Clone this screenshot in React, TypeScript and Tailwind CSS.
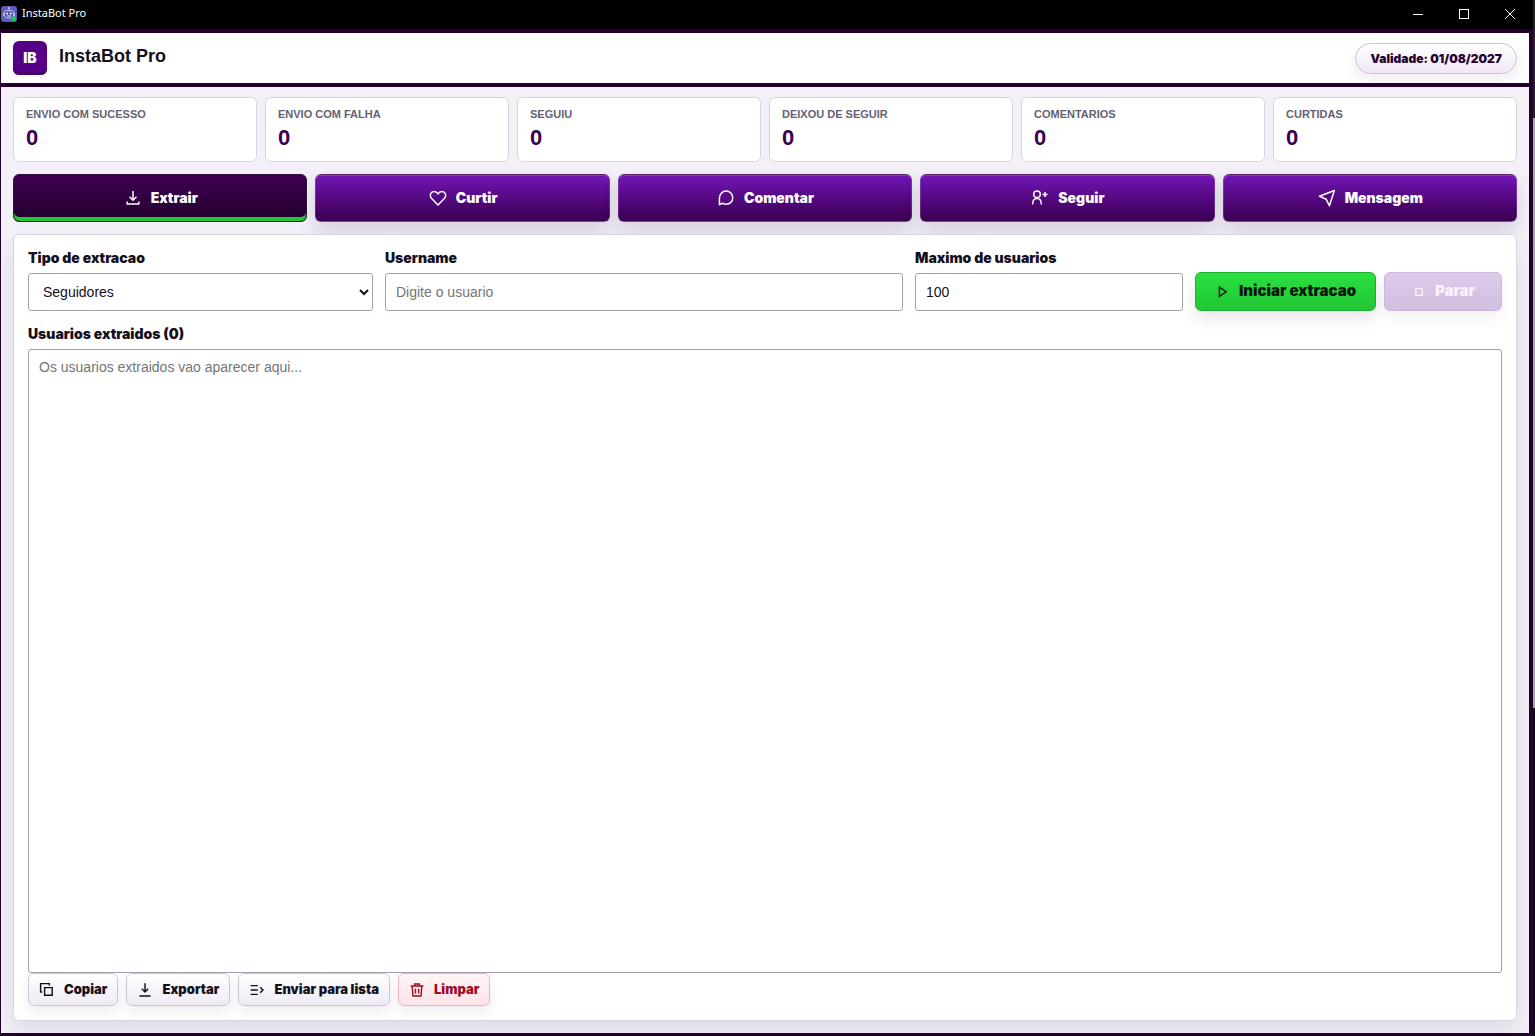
import { ReactNode, useState } from "react";

const heavy = "font-['Arial_Black','Inter',sans-serif] font-black";

const Icon = ({
  children,
  className = "h-5 w-5",
}: {
  children: ReactNode;
  className?: string;
}) => (
  <svg
    viewBox="0 0 20 20"
    className={`shrink-0 ${className}`}
    fill="none"
    stroke="currentColor"
    strokeWidth="1.5"
    aria-hidden="true"
  >
    {children}
  </svg>
);

const DownloadIcon = () => (
  <Icon>
    <path d="M10 3v9M6.5 8.8 10 12.3l3.5-3.5M4.2 13.500v2.500h11.600v-2.500" />
  </Icon>
);

const HeartIcon = () => (
  <Icon>
    <path
      strokeLinejoin="round"
      d="M10 17 3.400 10.300C.8 7 3 3.600 6 3.600c1.800 0 3.200 1 4 2.400.8-1.400 2.200-2.400 4-2.400 3 0 5.200 3.400 2.600 6.700z"
    />
  </Icon>
);

const CommentIcon = () => (
  <Icon>
    <path
      strokeLinejoin="round"
      d="M3.400 16.600v-6.300C3.400 6.300 6.300 3 10.200 3c3.800 0 6.500 3 6.500 6.700s-2.700 6.600-6.500 6.600c-1.500 0-2.700-.3-3.800-1.100z"
    />
  </Icon>
);

const FollowIcon = () => (
  <Icon>
    <circle cx="7" cy="6.300" r="3.300" />
    <path d="M2.600 16.500c0-4 1.600-5.900 4.400-5.900s4.400 1.900 4.400 5.900M15 4v5M12.500 6.500h5" />
  </Icon>
);

const SendIcon = () => (
  <Icon>
    <path strokeLinejoin="round" d="M2.500 8.300 17.300 2.500 12.400 17.700 9.200 11.300z" />
  </Icon>
);

const stats = [
  { label: "ENVIO COM SUCESSO", value: 0 },
  { label: "ENVIO COM FALHA", value: 0 },
  { label: "SEGUIU", value: 0 },
  { label: "DEIXOU DE SEGUIR", value: 0 },
  { label: "COMENTARIOS", value: 0 },
  { label: "CURTIDAS", value: 0 },
];

const tabs = [
  { name: "Extrair", icon: <DownloadIcon /> },
  { name: "Curtir", icon: <HeartIcon /> },
  { name: "Comentar", icon: <CommentIcon /> },
  { name: "Seguir", icon: <FollowIcon /> },
  { name: "Mensagem", icon: <SendIcon /> },
];

const windowButtonClass = "flex h-7 w-[46px] items-center justify-center";

const TitleBar = () => (
  <div className="flex h-[29px] shrink-0 items-start justify-between bg-black text-white">
    <div className="flex h-[27px] items-center gap-[5px] pl-px">
      <svg viewBox="0 0 16 16" className="h-4 w-4" aria-hidden="true">
        <rect width="16" height="16" rx="3" fill="#6159bd" />
        <path d="M8 2v2.500M2.500 7v3M13.500 7v3" stroke="#b3b8ee" />
        <circle cx="8" cy="2" r="1" fill="#c9cdf5" />
        <rect x="3.500" y="4.500" width="9" height="7.500" rx="2" fill="#5a5cb0" stroke="#b3b8ee" />
        <circle cx="6.200" cy="7.500" r="0.900" fill="#fff" />
        <circle cx="9.800" cy="7.500" r="0.900" fill="#fff" />
        <path d="M6 10h4" stroke="#dfe1fb" />
        <circle cx="12.700" cy="12.700" r="2.500" fill="#16c96b" />
      </svg>
      <span className="font-['Noto_Sans',sans-serif] text-[11px]">
        InstaBot Pro
      </span>
    </div>
    <div className="flex">
      <button aria-label="Minimizar" className={windowButtonClass}>
        <svg viewBox="0 0 10 10" className="h-2.5 w-2.5" stroke="#fff" fill="none" shapeRendering="crispEdges">
          <path d="M0 5.500h10" />
        </svg>
      </button>
      <button aria-label="Maximizar" className={windowButtonClass}>
        <svg viewBox="0 0 10 10" className="h-2.5 w-2.5" stroke="#fff" fill="none" shapeRendering="crispEdges">
          <rect x="0.500" y="0.500" width="9" height="9" />
        </svg>
      </button>
      <button aria-label="Fechar" className={windowButtonClass}>
        <svg viewBox="0 0 10 10" className="h-2.5 w-2.5" stroke="#fff" fill="none">
          <path d="m0 0 10 10M10 0 0 10" />
        </svg>
      </button>
    </div>
  </div>
);

const Header = () => (
  <header className="flex h-[50px] shrink-0 items-center justify-between bg-white px-3">
    <div className="flex items-start gap-3">
      <div
        className={`flex h-[34px] w-[34px] items-center justify-center rounded-md bg-[#560086] text-sm text-white shadow-[inset_0_-3px_0_#470070] ${heavy}`}
      >
        IB
      </div>
      <h1 className="pt-1 text-lg leading-[22px] font-bold">InstaBot Pro</h1>
    </div>
    <div
      className={`rounded-full border border-[#d3bce2] bg-linear-to-b from-white to-[#f0e8f6] px-3.5 py-1.5 text-xs leading-[17px] text-[#270031] shadow-[0_6px_14px_rgba(36,0,46,0.08)] ${heavy}`}
    >
      Validade: 01/08/2027
    </div>
  </header>
);

const fieldClass =
  "h-[38px] w-full rounded-[3px] border border-[#a59fb3] bg-white px-2.5 text-sm text-[#15101d] placeholder:text-[#757575]";
const labelClass = `text-sm leading-[18px] ${heavy}`;
const toolClass = `flex h-[33px] items-center gap-[9px] rounded-md border px-2.5 text-[13px] shadow-[0_6px_12px_rgba(36,0,46,0.08)] ${heavy}`;
const lightTool = "border-[#cfc6dc] bg-linear-to-b from-white to-[#eeeaf4]";

const ExtractPanel = () => {
  const [type, setType] = useState("Seguidores");
  const [username, setUsername] = useState("");
  const [max, setMax] = useState("100");
  const [users, setUsers] = useState("");
  const count = users.split("\n").filter(Boolean).length;

  return (
    <main className="flex flex-1 flex-col rounded-md border border-[#d9d4e2] bg-white p-3.5 shadow-[0_10px_24px_rgba(36,0,46,0.09)]">
      <div className="flex items-end gap-3">
        <div className="flex flex-[345_1_0] flex-col gap-1.5">
          <label htmlFor="type" className={labelClass}>Tipo de extracao</label>
          <select id="type" value={type} onChange={(e) => setType(e.target.value)} className={fieldClass}>
            <option>Seguidores</option>
            <option>Seguindo</option>
          </select>
        </div>
        <div className="flex flex-[518_1_0] flex-col gap-1.5">
          <label htmlFor="username" className={labelClass}>Username</label>
          <input
            id="username"
            placeholder="Digite o usuario"
            value={username}
            onChange={(e) => setUsername(e.target.value)}
            className={fieldClass}
          />
        </div>
        <div className="flex flex-[268_1_0] flex-col gap-1.5">
          <label htmlFor="max" className={labelClass}>Maximo de usuarios</label>
          <input id="max" value={max} onChange={(e) => setMax(e.target.value)} className={fieldClass} />
        </div>
        <div className="flex gap-2">
          <button
            className={`flex h-[39px] w-[181px] items-center justify-center gap-2 rounded-md border border-[#1fae31] bg-linear-to-b from-[#29e03f] to-[#22c735] text-[15px] text-[#07180a] shadow-[0_8px_16px_rgba(36,0,46,0.1)] ${heavy}`}
          >
            <Icon className="h-4 w-4">
              <path strokeWidth="1.800" d="M5.500 4v11.500L14 9.700z" />
            </Icon>
            Iniciar extracao
          </button>
          <button
            disabled
            className={`flex h-[39px] w-[118px] items-center justify-center gap-2 rounded-md border border-[#cdb6dc] bg-linear-to-b from-[#decaea] to-[#d2bfe0] text-[15px] text-[#f8f2fc] shadow-[0_8px_16px_rgba(36,0,46,0.05)] ${heavy}`}
          >
            <Icon className="h-4 w-4">
              <path strokeWidth="1.800" d="M6 5.500h8v8.500H6z" />
            </Icon>
            Parar
          </button>
        </div>
      </div>
      <label htmlFor="users" className={`mt-3.5 mb-1.5 ${labelClass}`}>
        Usuarios extraidos ({count})
      </label>
      <textarea
        id="users"
        value={users}
        onChange={(e) => setUsers(e.target.value)}
        placeholder="Os usuarios extraidos vao aparecer aqui..."
        className="block w-full flex-1 resize-none rounded-[3px] border border-[#a59fb3] bg-white px-2.5 py-2 text-sm leading-[18px] placeholder:text-[#757575]"
      />
      <div className="flex gap-2">
        <button className={`${toolClass} ${lightTool}`}>
          <Icon className="h-4 w-4">
            <path strokeWidth="1.800" d="M4 12.500H2V2h11v2.500M7 7h9.500v9.500H7z" />
          </Icon>
          Copiar
        </button>
        <button className={`${toolClass} ${lightTool}`}>
          <Icon className="h-4 w-4">
            <path strokeWidth="1.800" d="M10 1.500v11M6 8.500l4 4 4-4M3 17.500h14" />
          </Icon>
          Exportar
        </button>
        <button className={`${toolClass} ${lightTool}`}>
          <Icon className="h-4 w-4">
            <path strokeWidth="1.800" d="M2 4.500h9M2 10h9M2 15.500h9M14 6.500l3.500 3.500-3.500 3.500" />
          </Icon>
          Enviar para lista
        </button>
        <button
          onClick={() => setUsers("")}
          className={`${toolClass} border-[#efb2bc] bg-linear-to-b from-[#fff5f6] to-[#fde3e6] text-[#9c0f28]`}
        >
          <Icon className="h-4 w-4">
            <path strokeWidth="1.800" d="M2 5h16M7 5V2.500h6V5M4 5l1 12.500h10L16 5M8 8.500v6M12 8.500v6" />
          </Icon>
          Limpar
        </button>
      </div>
    </main>
  );
};

export default function App() {
  const [active, setActive] = useState("Extrair");

  return (
    <div className="flex min-h-screen bg-black font-['Liberation_Sans',Arial,sans-serif] text-[#15101d]">
      <div className="flex flex-1 flex-col">
        <TitleBar />
        <div className="flex flex-1 flex-col border-t-4 border-r-4 border-b-[3px] border-l border-[#24002e]">
          <Header />
          <div className="flex flex-1 flex-col gap-3 border-t-4 border-[#24002e] bg-[#f3f0f7] px-3 pt-2.5 pb-3">
            <section className="grid grid-cols-6 gap-2">
              {stats.map((stat) => (
                <div key={stat.label} className="h-[65px] rounded-md border border-[#d9d4e2] bg-white px-3 pt-2">
                  <p className="text-[11px] leading-4 font-bold text-[#665f73]">{stat.label}</p>
                  <p className="text-[22px] leading-8 font-bold text-[#3a0050]">{stat.value}</p>
                </div>
              ))}
            </section>
            <nav className="grid grid-cols-5 gap-2">
              {tabs.map((tab) => (
                <button
                  key={tab.name}
                  onClick={() => setActive(tab.name)}
                  className={`flex h-12 items-center justify-center gap-2 rounded-md border text-sm text-white ${heavy} ${
                    active === tab.name
                      ? "border-[#2f1239] bg-linear-to-b from-[#3d0052] to-[#24002e] shadow-[inset_0_-4px_0_#22c735]"
                      : "border-white/15 bg-linear-to-b from-[#7216b8] to-[#3a0050] shadow-[inset_0_1px_0_rgba(255,255,255,0.14),0_8px_18px_rgba(36,0,46,0.14)]"
                  }`}
                >
                  {tab.icon}
                  {tab.name}
                </button>
              ))}
            </nav>
            <ExtractPanel />
          </div>
        </div>
      </div>
      {/* sliver of the window behind */}
      <div className="flex w-0.5 shrink-0 flex-col">
        <div className="h-[118px] bg-[#222222]" />
        <div className="h-[590px] bg-[#a9a9a9]" />
        <div className="flex-1 bg-[#0c0c0c]" />
      </div>
    </div>
  );
}
